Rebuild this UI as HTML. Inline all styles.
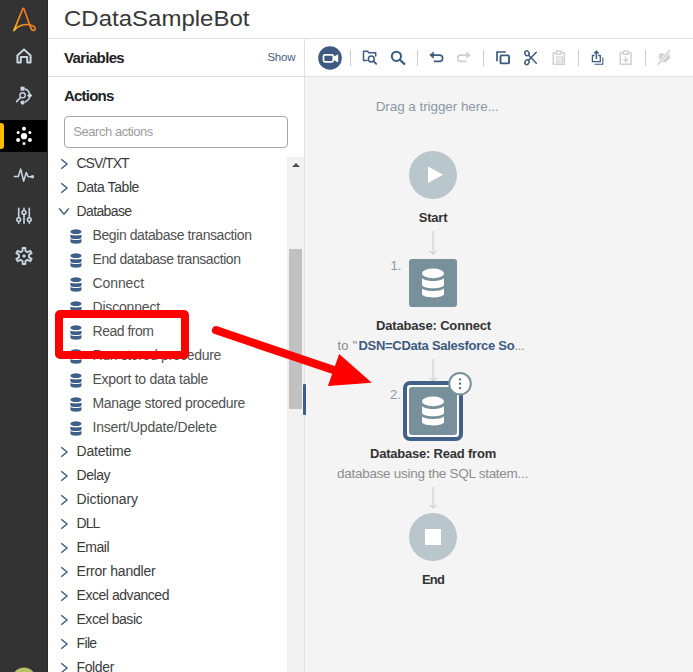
<!DOCTYPE html>
<html><head><meta charset="utf-8"><title>CDataSampleBot</title>
<style>
*{box-sizing:border-box;margin:0;padding:0}
html,body{width:693px;height:672px;overflow:hidden;background:#fff;font-family:"Liberation Sans",sans-serif;color:#333}
.abs{position:absolute}
#nav{left:0;top:0;width:48px;height:672px;background:#333;overflow:hidden;border-right:1px solid #2b2b2b}
#nav .active{left:0;top:120px;width:48px;height:32px;background:#000}
#nav .bar{left:0;top:123px;width:4px;height:26px;background:#ffbc03;border-radius:0 3px 3px 0}
#title{left:64px;top:5px;font-size:22px;line-height:28px;color:#383838;white-space:nowrap;transform:scaleX(1.0913);transform-origin:0 0}
.hline{height:1px;background:#e0e2e2}
.h1{font-size:15px;font-weight:bold;color:#222;white-space:nowrap;line-height:18px}
#search{left:64px;top:116px;width:224px;height:32px;border:1px solid #a6a6a6;border-radius:4px;background:#fff}
#search span{position:absolute;left:8.300px;top:6.500px;font-size:13px;line-height:15px;color:#9d9d9d;white-space:nowrap;letter-spacing:-0.46px}
#list{left:48px;top:157px;width:239px;height:515px;overflow:hidden}
.row{position:absolute;height:24px;line-height:24px;font-size:14px;color:#3a3a3a;white-space:nowrap}
.row.p{left:28.5px}
.row.c{left:44.5px;color:#505050}
.chev{position:absolute}
#canvas{left:305px;top:77px;width:388px;height:595px;background:#f4f4f4}
#toolbar{left:305px;top:39px;width:388px;height:37px;background:#fff}
.lbl{position:absolute;white-space:nowrap;font-size:13px;line-height:16px;transform:translateX(-50%)}
.b{font-weight:bold;color:#333}
.sep{position:absolute;top:50px;width:1px;height:16px;background:#ccc}
</style></head><body>
<div id="nav" class="abs"><div class="abs active"></div><div class="abs bar"></div>
<svg class="abs" style="left:0;top:0" width="48" height="672" viewBox="0 0 48 672">
 <defs><linearGradient id="lg" x1="13" y1="30" x2="33" y2="14" gradientUnits="userSpaceOnUse"><stop offset="0" stop-color="#ffc20e"/><stop offset="0.400" stop-color="#f8951d"/><stop offset="1" stop-color="#f26522"/></linearGradient></defs>
 <path d="M13.900 30.500L22.600 9.200Q23.300 7.700 24.100 9.200L30.200 26.200C31 28.800 32.200 30.600 33.700 30.500C35.500 30.300 35.800 27.600 33.600 26.300C29 23.500 19.500 23.500 13.900 30.500z" fill="none" stroke="url(#lg)" stroke-width="1.700" stroke-linejoin="round"/>
 <g fill="none" stroke="#c9d6e2" stroke-width="2" stroke-linejoin="round" stroke-linecap="round">
  <path d="M20.800 62.400H17.400V55.400L24 49.600L30.600 55.400V62.400H27.200V57H20.800z"/>
 </g>
 <g fill="none" stroke="#c9d6e2" stroke-width="1.400">
  <circle cx="22.600" cy="95.300" r="2.600"/>
  <path d="M20.500 97.500L16.600 101.600" stroke-linecap="round" stroke-width="1.600"/>
  <path d="M24.500 88.800A7.200 7.200 0 0 1 29.500 93.500M29.500 97.500A7.200 7.200 0 0 1 24.800 102" />
 </g>
 <g fill="#c9d6e2"><rect x="20.500" y="86.700" width="4" height="4"/><path d="M29.700 92.700L32.300 95.500L29.700 98.300L27.100 95.500z"/><circle cx="22.600" cy="102.600" r="2.100"/></g>
 <g fill="#fff">
  <circle cx="24" cy="136.200" r="3.100"/>
  <circle cx="24" cy="128.800" r="2"/><circle cx="29.900" cy="132.600" r="1.500"/><circle cx="29.900" cy="140" r="2"/>
  <circle cx="24" cy="143.400" r="1.500"/><circle cx="18.100" cy="140" r="2"/><circle cx="18.100" cy="132.600" r="1.500"/>
 </g>
 <g fill="none" stroke="#c9d6e2" stroke-width="1.500" stroke-linejoin="round" stroke-linecap="round">
  <path d="M14.300 176.400H18.300L20.700 169L23.600 181.200L26.300 172.500L28.200 176.800H31"/>
 </g>
 <circle cx="32.400" cy="176.800" r="1.700" fill="#c9d6e2"/>
 <g fill="none" stroke="#c9d6e2" stroke-width="1.600" stroke-linecap="round">
  <path d="M18.700 208.300V217.300M18.700 222V223.200M24 208.300V210M24 214.800V223.200M29.300 208.300V217.300M29.300 222V223.200"/>
  <circle cx="18.700" cy="219.600" r="1.900"/><circle cx="24" cy="212.400" r="1.900"/><circle cx="29.300" cy="219.600" r="1.900"/>
 </g>
 <g fill="none" stroke="#c9d6e2" stroke-width="1.900" stroke-linejoin="round">
  <path d="M22.48 251.03L22.66 248.01L25.34 248.01L25.52 251.03L27.55 252.20L30.25 250.85L31.59 253.16L29.07 254.83L29.07 257.17L31.59 258.84L30.25 261.15L27.55 259.80L25.52 260.97L25.34 263.99L22.66 263.99L22.48 260.97L20.45 259.80L17.75 261.15L16.41 258.84L18.93 257.17L18.93 254.83L16.41 253.16L17.75 250.85L20.45 252.20z"/>
 </g>
 <circle cx="24" cy="256" r="1.700" fill="#c9d6e2"/>
 <circle cx="24" cy="679.500" r="12" fill="#b7c062"/>
</svg>

</div>
<div id="title" class="abs">CDataSampleBot</div>
<div class="abs hline" style="left:48px;top:38px;width:645px"></div>
<div class="abs hline" style="left:48px;top:76px;width:645px"></div>
<div class="abs h1" style="left:64px;top:49px;letter-spacing:-0.65px">Variables</div>
<div class="abs" style="left:267.400px;top:50px;font-size:11.5px;line-height:14px;color:#3f5d87;letter-spacing:-0.2px">Show</div>
<div class="abs h1" style="left:64px;top:87px;letter-spacing:-0.79px">Actions</div>
<div id="search" class="abs"><span>Search actions</span></div>
<div id="list" class="abs">
<svg class="chev" style="left:12px;top:0.5px" width="9" height="12" viewBox="0 0 9 12"><path d="M1.2 1.2L7 6L1.200 10.800" fill="none" stroke="#3d5a80" stroke-width="1.4"/></svg><div class="row p" style="top:-6.0px;letter-spacing:-1.02px">CSV/TXT</div>
<svg class="chev" style="left:12px;top:24.5px" width="9" height="12" viewBox="0 0 9 12"><path d="M1.2 1.2L7 6L1.200 10.800" fill="none" stroke="#3d5a80" stroke-width="1.4"/></svg><div class="row p" style="top:18.0px;letter-spacing:-0.42px">Data Table</div>
<svg class="chev" style="left:10px;top:49.5px" width="12" height="9" viewBox="0 0 12 9"><path d="M1.2 1.5L6 7.200L10.800 1.500" fill="none" stroke="#3d5a80" stroke-width="1.4"/></svg><div class="row p" style="top:42.0px;letter-spacing:-0.62px">Database</div>
<svg class="chev" style="left:22px;top:71.5px" width="12" height="15" viewBox="0 0 12 15"><g fill="#3f5f88"><ellipse cx="5.95" cy="2.7" rx="5.55" ry="2.4"/><path d="M0.4 5.500c.9.700 2.800 .900 5.550 .900s4.650-.2 5.550-.900v2.900c0 .9-2.500 1.600-5.550 1.600s-5.550-.7-5.550-1.600z"/><path d="M0.4 10c.9.800 2.800 1.100 5.550 1.100s4.650-.3 5.550-1.100v2.800c0 1.100-2.500 2-5.550 2s-5.550-.9-5.550-2z"/></g></svg><div class="row c" style="top:66.0px;letter-spacing:-0.41px">Begin database transaction</div>
<svg class="chev" style="left:22px;top:95.5px" width="12" height="15" viewBox="0 0 12 15"><g fill="#3f5f88"><ellipse cx="5.95" cy="2.7" rx="5.55" ry="2.4"/><path d="M0.4 5.500c.9.700 2.800 .900 5.550 .900s4.650-.2 5.550-.900v2.900c0 .9-2.500 1.600-5.550 1.600s-5.550-.7-5.550-1.600z"/><path d="M0.4 10c.9.800 2.800 1.100 5.550 1.100s4.650-.3 5.550-1.100v2.800c0 1.100-2.500 2-5.550 2s-5.550-.9-5.550-2z"/></g></svg><div class="row c" style="top:90.0px;letter-spacing:-0.45px">End database transaction</div>
<svg class="chev" style="left:22px;top:119.5px" width="12" height="15" viewBox="0 0 12 15"><g fill="#3f5f88"><ellipse cx="5.95" cy="2.7" rx="5.55" ry="2.4"/><path d="M0.4 5.500c.9.700 2.800 .900 5.550 .900s4.650-.2 5.550-.900v2.900c0 .9-2.500 1.600-5.550 1.600s-5.550-.7-5.550-1.600z"/><path d="M0.4 10c.9.800 2.800 1.100 5.550 1.100s4.650-.3 5.550-1.100v2.800c0 1.100-2.500 2-5.550 2s-5.550-.9-5.550-2z"/></g></svg><div class="row c" style="top:114.0px;letter-spacing:-0.09px">Connect</div>
<svg class="chev" style="left:22px;top:143.5px" width="12" height="15" viewBox="0 0 12 15"><g fill="#3f5f88"><ellipse cx="5.95" cy="2.7" rx="5.55" ry="2.4"/><path d="M0.4 5.500c.9.700 2.800 .900 5.550 .900s4.650-.2 5.550-.900v2.900c0 .9-2.500 1.600-5.550 1.600s-5.550-.7-5.550-1.600z"/><path d="M0.4 10c.9.800 2.800 1.100 5.550 1.100s4.650-.3 5.550-1.100v2.800c0 1.100-2.500 2-5.550 2s-5.550-.9-5.550-2z"/></g></svg><div class="row c" style="top:138.0px;letter-spacing:-0.18px">Disconnect</div>
<svg class="chev" style="left:22px;top:167.5px" width="12" height="15" viewBox="0 0 12 15"><g fill="#3f5f88"><ellipse cx="5.95" cy="2.7" rx="5.55" ry="2.4"/><path d="M0.4 5.500c.9.700 2.800 .900 5.550 .900s4.650-.2 5.550-.900v2.900c0 .9-2.500 1.600-5.550 1.600s-5.550-.7-5.550-1.600z"/><path d="M0.4 10c.9.800 2.800 1.100 5.550 1.100s4.650-.3 5.550-1.100v2.800c0 1.100-2.500 2-5.550 2s-5.550-.9-5.550-2z"/></g></svg><div class="row c" style="top:162.0px;letter-spacing:-0.48px">Read from</div>
<svg class="chev" style="left:22px;top:191.5px" width="12" height="15" viewBox="0 0 12 15"><g fill="#3f5f88"><ellipse cx="5.95" cy="2.7" rx="5.55" ry="2.4"/><path d="M0.4 5.500c.9.700 2.800 .900 5.550 .900s4.650-.2 5.550-.900v2.900c0 .9-2.500 1.600-5.550 1.600s-5.550-.7-5.550-1.600z"/><path d="M0.4 10c.9.800 2.800 1.100 5.550 1.100s4.650-.3 5.550-1.100v2.800c0 1.100-2.500 2-5.550 2s-5.550-.9-5.550-2z"/></g></svg><div class="row c" style="top:186.0px;letter-spacing:-0.35px">Run stored procedure</div>
<svg class="chev" style="left:22px;top:215.5px" width="12" height="15" viewBox="0 0 12 15"><g fill="#3f5f88"><ellipse cx="5.95" cy="2.7" rx="5.55" ry="2.4"/><path d="M0.4 5.500c.9.700 2.800 .900 5.550 .900s4.650-.2 5.550-.900v2.900c0 .9-2.500 1.600-5.550 1.600s-5.550-.7-5.550-1.600z"/><path d="M0.4 10c.9.800 2.800 1.100 5.550 1.100s4.650-.3 5.550-1.100v2.800c0 1.100-2.500 2-5.550 2s-5.550-.9-5.550-2z"/></g></svg><div class="row c" style="top:210.0px;letter-spacing:-0.3px">Export to data table</div>
<svg class="chev" style="left:22px;top:239.5px" width="12" height="15" viewBox="0 0 12 15"><g fill="#3f5f88"><ellipse cx="5.95" cy="2.7" rx="5.55" ry="2.4"/><path d="M0.4 5.500c.9.700 2.800 .900 5.550 .900s4.650-.2 5.550-.900v2.900c0 .9-2.500 1.600-5.550 1.600s-5.550-.7-5.550-1.600z"/><path d="M0.4 10c.9.800 2.800 1.100 5.550 1.100s4.650-.3 5.550-1.100v2.800c0 1.100-2.500 2-5.550 2s-5.550-.9-5.550-2z"/></g></svg><div class="row c" style="top:234.0px;letter-spacing:-0.34px">Manage stored procedure</div>
<svg class="chev" style="left:22px;top:263.5px" width="12" height="15" viewBox="0 0 12 15"><g fill="#3f5f88"><ellipse cx="5.95" cy="2.7" rx="5.55" ry="2.4"/><path d="M0.4 5.500c.9.700 2.800 .900 5.550 .900s4.650-.2 5.550-.900v2.900c0 .9-2.500 1.600-5.550 1.600s-5.550-.7-5.550-1.600z"/><path d="M0.4 10c.9.800 2.800 1.100 5.550 1.100s4.650-.3 5.550-1.100v2.800c0 1.100-2.500 2-5.550 2s-5.550-.9-5.550-2z"/></g></svg><div class="row c" style="top:258.0px;letter-spacing:-0.21px">Insert/Update/Delete</div>
<svg class="chev" style="left:12px;top:288.5px" width="9" height="12" viewBox="0 0 9 12"><path d="M1.2 1.2L7 6L1.200 10.800" fill="none" stroke="#3d5a80" stroke-width="1.4"/></svg><div class="row p" style="top:282.0px;letter-spacing:-0.19px">Datetime</div>
<svg class="chev" style="left:12px;top:312.5px" width="9" height="12" viewBox="0 0 9 12"><path d="M1.2 1.2L7 6L1.200 10.800" fill="none" stroke="#3d5a80" stroke-width="1.4"/></svg><div class="row p" style="top:306.0px;letter-spacing:-0.46px">Delay</div>
<svg class="chev" style="left:12px;top:336.5px" width="9" height="12" viewBox="0 0 9 12"><path d="M1.2 1.2L7 6L1.200 10.800" fill="none" stroke="#3d5a80" stroke-width="1.4"/></svg><div class="row p" style="top:330.0px;letter-spacing:-0.07px">Dictionary</div>
<svg class="chev" style="left:12px;top:360.5px" width="9" height="12" viewBox="0 0 9 12"><path d="M1.2 1.2L7 6L1.200 10.800" fill="none" stroke="#3d5a80" stroke-width="1.4"/></svg><div class="row p" style="top:354.0px;letter-spacing:-0.9px">DLL</div>
<svg class="chev" style="left:12px;top:384.5px" width="9" height="12" viewBox="0 0 9 12"><path d="M1.2 1.2L7 6L1.200 10.800" fill="none" stroke="#3d5a80" stroke-width="1.4"/></svg><div class="row p" style="top:378.0px;letter-spacing:-0.5px">Email</div>
<svg class="chev" style="left:12px;top:408.5px" width="9" height="12" viewBox="0 0 9 12"><path d="M1.2 1.2L7 6L1.200 10.800" fill="none" stroke="#3d5a80" stroke-width="1.4"/></svg><div class="row p" style="top:402.0px;letter-spacing:-0.21px">Error handler</div>
<svg class="chev" style="left:12px;top:432.5px" width="9" height="12" viewBox="0 0 9 12"><path d="M1.2 1.2L7 6L1.200 10.800" fill="none" stroke="#3d5a80" stroke-width="1.4"/></svg><div class="row p" style="top:426.0px;letter-spacing:-0.45px">Excel advanced</div>
<svg class="chev" style="left:12px;top:456.5px" width="9" height="12" viewBox="0 0 9 12"><path d="M1.2 1.2L7 6L1.200 10.800" fill="none" stroke="#3d5a80" stroke-width="1.4"/></svg><div class="row p" style="top:450.0px;letter-spacing:-0.48px">Excel basic</div>
<svg class="chev" style="left:12px;top:480.5px" width="9" height="12" viewBox="0 0 9 12"><path d="M1.2 1.2L7 6L1.200 10.800" fill="none" stroke="#3d5a80" stroke-width="1.4"/></svg><div class="row p" style="top:474.0px;letter-spacing:-0.64px">File</div>
<svg class="chev" style="left:12px;top:504.5px" width="9" height="12" viewBox="0 0 9 12"><path d="M1.2 1.2L7 6L1.200 10.800" fill="none" stroke="#3d5a80" stroke-width="1.4"/></svg><div class="row p" style="top:498.0px;letter-spacing:-0.36px">Folder</div>
</div>
<!-- scrollbar -->
<div class="abs" style="left:287px;top:157px;width:17px;height:515px;background:#f1f1f1"></div>
<div class="abs" style="left:291.500px;top:162.500px;width:0;height:0;border-left:4px solid transparent;border-right:4px solid transparent;border-bottom:4.500px solid #4a4a4a"></div>
<div class="abs" style="left:289px;top:249px;width:13px;height:160px;background:#c1c1c1"></div>
<!-- splitter -->
<div class="abs" style="left:304px;top:39px;width:1px;height:633px;background:#e0e2e2"></div>
<div id="toolbar" class="abs"></div>
<div class="sep" style="left:350px"></div><div class="sep" style="left:417px"></div><div class="sep" style="left:483px"></div><div class="sep" style="left:578px"></div><div class="sep" style="left:645px"></div>
<svg class="abs" style="left:310px;top:40px" width="383" height="36" viewBox="310 40 383 36">
 <circle cx="330" cy="58" r="11.800" fill="#3d5a80"/>
 <rect x="323.500" y="54.800" width="9.800" height="7" rx="1.500" fill="none" stroke="#fff" stroke-width="1.700"/>
 <path d="M333.500 56.800L338.200 54.200V62.400L333.500 59.800z" fill="#fff"/>
 <g fill="none" stroke="#3d5a80" stroke-width="1.500" stroke-linejoin="round" stroke-linecap="round">
  <path d="M367 60.400H363.500V51.200H367.600L368.800 52.800H375.700V56"/>
  <circle cx="371.300" cy="59" r="2.900"/>
  <path d="M373.500 61.200L376.200 63.900" stroke-width="1.800"/>
 </g>
 <g fill="none" stroke="#3d5a80" stroke-width="2" stroke-linecap="round">
  <circle cx="396.400" cy="56.300" r="4.600"/>
  <path d="M399.900 59.800L404.300 63.900" stroke-width="2.200"/>
 </g>
 <g fill="none" stroke="#3d5a80" stroke-width="1.600">
  <path d="M433 55.100H439.500A3.100 3.100 0 0 1 439.500 61.400H433.800"/>
 </g>
 <path d="M429.300 55.100L433.800 51.400V58.800z" fill="#3d5a80"/>
 <g fill="none" stroke="#cfcfcf" stroke-width="1.600">
  <path d="M467.200 55.100H460.700A3.100 3.100 0 0 0 460.700 61.400H466.400"/>
 </g>
 <path d="M470.900 55.100L466.400 51.400V58.800z" fill="#cfcfcf"/>
 <g fill="none" stroke="#3d5a80" stroke-width="1.900" stroke-linejoin="round">
  <rect x="500.500" y="55.400" width="8.500" height="8" rx="1"/>
  <path d="M497 61.200V52H505.800" stroke-width="1.700"/>
 </g>
 <g fill="none" stroke="#3d5a80" stroke-width="1.500" stroke-linecap="round">
  <ellipse cx="527" cy="53.300" rx="2" ry="2.500" transform="rotate(-30 527 53.300)"/>
  <ellipse cx="527" cy="62.200" rx="2" ry="2.500" transform="rotate(30 527 62.200)"/>
  <path d="M528.500 55.300L536.300 63.200M528.500 60.200L536.300 52.300"/>
 </g>
 <g fill="none" stroke="#cfcfcf" stroke-width="1.500" stroke-linejoin="round">
  <path d="M556 52.800H553.300V64.300H564.300V52.800H561.600"/>
  <rect x="556.300" y="51" width="5" height="3.200" rx="0.800"/>
  <rect x="556.800" y="56.800" width="5.800" height="5.500" stroke-width="1.100"/>
  <path d="M558 58.600H561.500M558 60.500H561.500" stroke-width="0.900"/>
 </g>
 <g fill="none" stroke="#3d5a80" stroke-width="1.300" stroke-linejoin="round">
  <path d="M594.500 55.500H592.400V61.700H600.300V55.500H598.200"/>
  <path d="M596.400 59V51.500M594.200 53.600L596.400 51.300L598.600 53.600" stroke-width="1.500"/>
  <path d="M594.500 64.200H602.800V57.500" stroke-width="1.100"/>
 </g>
 <g fill="none" stroke="#cfcfcf" stroke-width="1.500" stroke-linejoin="round">
  <path d="M622.700 52.800H620.300V64.300H631V52.800H628.600"/>
  <rect x="623.200" y="51" width="5" height="3.200" rx="0.800"/>
  <path d="M625.700 56.500V61.500M623.500 59.400L625.700 61.700L627.900 59.400" stroke-width="1.300"/>
 </g>
 <path d="M659.200 53.500H669.300L670 58.500L665.300 62.300H659.200z" fill="#cfcfcf"/>
 <path d="M669.700 50.300L657.700 65" stroke="#fff" stroke-width="3.200"/>
 <path d="M669.700 50.300L657.700 65" stroke="#cfcfcf" stroke-width="1.400"/>
</svg>

<div id="canvas" class="abs"></div>
<div class="abs" style="left:303px;top:383.500px;width:3px;height:31px;background:#3f5d87;border-radius:1px"></div>
<div class="lbl" style="left:437.200px;top:98.600px;color:#8b98a4;font-size:13.5px;letter-spacing:-0.07px">Drag a trigger here...</div>
<svg class="abs" style="left:380px;top:140px" width="120" height="440" viewBox="380 140 120 440">
 <circle cx="433" cy="175" r="24" fill="#b9c6cc"/>
 <path d="M428 166.500L443 174.800L428 183z" fill="#fff"/>
 <g stroke="#d0d0d0" stroke-width="1.2" fill="none">
  <path d="M433 231V254M429.500 250.700L433 254.200L436.500 250.700"/>
  <path d="M433 359V381M429.500 377.500L433 381L436.500 377.500"/>
  <path d="M433 487V508M429.500 504.700L433 508.200L436.500 504.700"/>
 </g>
 <rect x="409" y="259" width="48" height="48" rx="3" fill="#78909c"/>
 <g fill="#fff" id="db1">
  <ellipse cx="433" cy="273.400" rx="11" ry="4.800"/>
  <path d="M422 277.900c1.500 2 6 3 11 3s9.500-1 11-3v6.800c0 2-5 3.600-11 3.600s-11-1.600-11-3.600z"/>
  <path d="M422 288.300c1.500 2 6 2.700 11 2.700s9.500-.7 11-2.700v5.800c0 2-5 3.400-11 3.400s-11-1.400-11-3.400z"/>
 </g>
 <rect x="405" y="383" width="56" height="56" rx="5" fill="#fff" stroke="#41608a" stroke-width="4"/>
 <rect x="409" y="387" width="48" height="48" rx="3" fill="#78909c"/>
 <g fill="#fff" transform="translate(0,128)">
  <ellipse cx="433" cy="273.400" rx="11" ry="4.800"/>
  <path d="M422 277.900c1.500 2 6 3 11 3s9.500-1 11-3v6.800c0 2-5 3.600-11 3.600s-11-1.600-11-3.600z"/>
  <path d="M422 288.300c1.500 2 6 2.700 11 2.700s9.500-.7 11-2.700v5.800c0 2-5 3.400-11 3.400s-11-1.400-11-3.400z"/>
 </g>
 <circle cx="460" cy="383.700" r="10.800" fill="#fff" stroke="#78909c" stroke-width="2"/>
 <g fill="#3d5a80"><circle cx="460" cy="379.300" r="1.100"/><circle cx="460" cy="383.700" r="1.100"/><circle cx="460" cy="388.100" r="1.100"/></g>
 <circle cx="433" cy="537" r="24" fill="#b9c6cc"/>
 <rect x="425" y="529" width="16" height="16" fill="#fff"/>
</svg>
<div class="lbl b" style="left:433px;top:209.500px;letter-spacing:-0.23px">Start</div>
<div class="abs" style="left:390.500px;top:258px;font-size:13px;line-height:16px;color:#8a9ba8">1.</div>
<div class="lbl b" style="left:433.500px;top:317.500px;letter-spacing:-0.16px">Database: Connect</div>
<div class="abs" style="left:337.400px;top:337.500px;font-size:13px;line-height:16px;color:#8a8a8a;white-space:nowrap;letter-spacing:0.23px">to "</div>
<div class="abs b" style="left:358.400px;top:337.500px;font-size:13px;line-height:16px;color:#3d5a80;white-space:nowrap;letter-spacing:-0.27px">DSN=CData Salesforce So</div>
<div class="abs" style="left:514.400px;top:337.500px;font-size:13px;line-height:16px;color:#8a8a8a;white-space:nowrap;letter-spacing:-0.28px">...</div>
<div class="abs" style="left:390px;top:386.600px;font-size:13px;line-height:16px;color:#8a9ba8">2.</div>
<div class="lbl b" style="left:433px;top:445.500px;letter-spacing:-0.21px">Database: Read from</div>
<div class="lbl" style="left:432.500px;top:466px;color:#8d8d8d;font-size:13.500px;letter-spacing:-0.28px">database using the SQL statem...</div>
<div class="lbl b" style="left:433px;top:571.500px;letter-spacing:-0.85px">End</div>

<div class="abs" style="left:55px;top:309.500px;width:134px;height:49px;border:8px solid #fe0000;border-radius:5px"></div>
<svg class="abs" style="left:200px;top:310px" width="190" height="90" viewBox="200 310 190 90">
 <path d="M216 330.200L337 371.200" stroke="#fe0000" stroke-width="8.200" stroke-linecap="round" fill="none"/>
 <path d="M339.200 354.100L371.800 382.700L327.900 386z" fill="#fe0000"/>
</svg>

</body></html>
